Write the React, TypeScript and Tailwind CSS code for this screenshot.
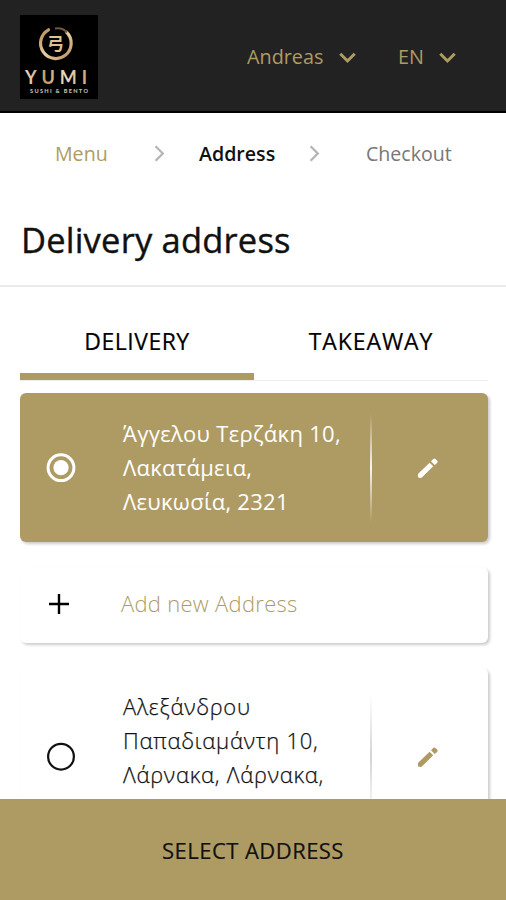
import React, { useState } from 'react';

const ChevronDown = () => (
  <svg className="w-[17px] h-[12px] mt-[2px] shrink-0" viewBox="0 0 17 12" fill="none" stroke="#ae9b64" strokeWidth="3">
    <path d="M1.3 1.8l7.2 7.2 7.2-7.2" />
  </svg>
);

const ChevronRight = () => (
  <svg className="w-[11px] h-[17px] mb-[2px] shrink-0" viewBox="0 0 11 17" fill="none" stroke="#b5b5b5" strokeWidth="2.3">
    <path d="M1.6 1.2l7.2 7.3-7.2 7.3" />
  </svg>
);

const Pencil = () => (
  <svg className="w-[22px] h-[22px]" viewBox="0 0 22 22" fill="currentColor">
    <path d="M1.4 16.6c-.5.6-.6 1.2-.5 2l.1.9c.1.8.5 1.2 1.3 1.3l.9.1c.8.1 1.3 0 1.9-.6L16.2 9.3 12.6 5.7z" />
    <path d="M14 4.3l2.2-2.3c.7-.7 1.6-.7 2.3 0l1.6 1.6c.7.7.7 1.6 0 2.3L17.7 8z" />
  </svg>
);

const Logo = () => (
  <div className="w-[78px] h-[84px] bg-black overflow-hidden">
    <svg className="w-[78px] h-[84px]" viewBox="0 0 78 84">
      <defs>
        <linearGradient id="gold" x1="0" y1="0" x2="1" y2="1">
          <stop offset="0" stopColor="#b98a58" />
          <stop offset="0.5" stopColor="#e6cfa6" />
          <stop offset="1" stopColor="#b98f5c" />
        </linearGradient>
        <linearGradient id="word" x1="0" y1="0" x2="1" y2="0">
          <stop offset="0" stopColor="#e8dcc8" />
          <stop offset="0.35" stopColor="#c99a5f" />
          <stop offset="0.65" stopColor="#ecdcc0" />
          <stop offset="1" stopColor="#cfa676" />
        </linearGradient>
      </defs>
      <path d="M28.5 14.8A15.3 15.3 0 1 0 46.5 17.2" fill="none" stroke="url(#gold)" strokeWidth="3.2" strokeLinecap="round" />
      <path d="M35 13.6Q42.5 12.4 47 17.5" fill="none" stroke="#6e573f" strokeWidth="2" />
      <text x="35.6" y="35" textAnchor="middle" fontFamily="Noto Sans CJK JP, sans-serif" fontSize="17" fontWeight="700" fill="#e2c18f">弓</text>
      <g fontFamily="Lato, sans-serif" fontSize="18" fontWeight="700" fill="url(#word)">
        <text x="5" y="68.5" textLength="62" lengthAdjust="spacing">YUMI</text>
      </g>
      <text x="10" y="78" textLength="58" lengthAdjust="spacing" fontFamily="Lato, sans-serif" fontSize="5.6" fontWeight="900" fill="#c9bda9">SUSHI &amp; BENTO</text>
    </svg>
  </div>
);

interface AddressCardProps {
  lines: string[];
  selected: boolean;
  onSelect: () => void;
}

const AddressCard: React.FC<AddressCardProps> = ({ lines, selected, onSelect }) => (
  <div
    onClick={onSelect}
    className={`flex items-center shrink-0 rounded-md shadow-[2px_2px_3px_rgba(0,0,0,0.2)] ${
      selected ? 'h-[149px] bg-[#ae9b64] text-white' : 'h-[177px] bg-white text-[#111]'
    }`}
  >
    <div className="w-[102px] pl-[26px]">
      <svg className="w-[30px] h-[30px]" viewBox="0 0 30 30">
        <circle cx="15" cy="14.7" r="12.9" fill="none" stroke={selected ? '#fff' : '#111'} strokeWidth={selected ? 3 : 2.2} />
        {selected && <circle cx="15" cy="14.7" r="7.6" fill="#fff" />}
      </svg>
    </div>
    <div
      className={`w-[248px] pl-px text-[22px] leading-[34px] ${
        selected
          ? 'pb-[2px] font-normal tracking-[0.28px]'
          : 'pb-[34px] font-light tracking-[0.76px] [-webkit-text-stroke:0.25px_#111]'
      }`}
    >
      {lines.map(line => (
        <div key={line}>{line}</div>
      ))}
    </div>
    <div
      className={`bg-gradient-to-b from-transparent to-transparent ${
        selected ? 'w-[2px] h-[108px] via-white/90' : 'w-[2px] h-[126px] via-[#d4d4d4]'
      }`}
    />
    <div className={`flex-1 flex justify-center pr-[5px] ${selected ? 'text-white' : 'text-[#ae9b64]'}`}>
      <Pencil />
    </div>
  </div>
);

const addresses = [
  ['Άγγελου Τερζάκη 10,', 'Λακατάμεια,', 'Λευκωσία, 2321'],
  ['Αλεξάνδρου', 'Παπαδιαμάντη 10,', 'Λάρνακα, Λάρνακα,'],
];

export default function App() {
  const [selected, setSelected] = useState(0);

  return (
    <div className="w-[506px] h-[900px] flex flex-col bg-white overflow-hidden text-black font-['Open_Sans','Noto_Sans',sans-serif]">
      {/* Header */}
      <header className="h-[113px] shrink-0 flex items-center pl-5 pt-[3px] bg-[#222] border-b-2 border-black">
        <Logo />
        <button className="ml-[149px] w-[109px] flex items-center justify-between text-[19.8px] text-[#ae9b64]">
          <span>Andreas</span>
          <ChevronDown />
        </button>
        <button className="ml-[42px] w-[58px] flex items-center justify-between text-[19.8px] text-[#ae9b64]">
          <span>EN</span>
          <ChevronDown />
        </button>
      </header>

      {/* Steps */}
      <nav className="h-[80px] shrink-0 flex items-center pl-[55px] pt-[2px] text-[19.6px]">
        <span className="w-[99px] text-[#ae9b64]">Menu</span>
        <ChevronRight />
        <span className="w-[111px] ml-[34px] mr-[-1px] font-semibold text-[#111]">Address</span>
        <ChevronRight />
        <span className="ml-[46px] text-[#777]">Checkout</span>
      </nav>

      <h1 className="h-[94px] shrink-0 pl-[21px] pt-[22px] text-[34.5px] leading-[50px] tracking-[0.2px] text-[#111] border-b-2 border-[#ebebeb] [-webkit-text-stroke:0.4px_#111]">
        Delivery address
      </h1>

      {/* Tabs */}
      <div className="mx-5 h-[94px] w-[468px] shrink-0 flex text-[23px] border-b border-[#eee] [-webkit-text-stroke:0.2px_#000]">
        <div className="w-[234px] flex items-center justify-center pt-[23px] tracking-[0.5px] border-b-[7px] border-[#ae9b64]">DELIVERY</div>
        <div className="w-[234px] flex items-center justify-center pt-[16px] tracking-[0.9px]">TAKEAWAY</div>
      </div>

      <main className="flex-1 min-h-0 overflow-hidden flex flex-col gap-[25px] pl-5 pr-[18px] pt-3">
        <AddressCard lines={addresses[0]} selected={selected === 0} onSelect={() => setSelected(0)} />
        <button className="h-[76px] shrink-0 flex items-center rounded-md bg-white shadow-[2px_2px_3px_rgba(0,0,0,0.2)]">
          <span className="w-[101px] pl-[29px] pb-[2px]">
            <svg className="w-5 h-5" viewBox="0 0 20 20" stroke="#000" strokeWidth="2.4">
              <path d="M10 0v20M0 10h20" />
            </svg>
          </span>
          <span className="pb-[3px] text-[22px] font-light tracking-[0.28px] text-[#ae9b64]">Add new Address</span>
        </button>
        <AddressCard lines={addresses[1]} selected={selected === 1} onSelect={() => setSelected(1)} />
      </main>

      <button className="h-[101px] shrink-0 pt-px bg-[#ae9b64] text-[22px] tracking-[0.45px] text-[#111] [-webkit-text-stroke:0.2px_#111]">SELECT ADDRESS</button>
    </div>
  );
}
